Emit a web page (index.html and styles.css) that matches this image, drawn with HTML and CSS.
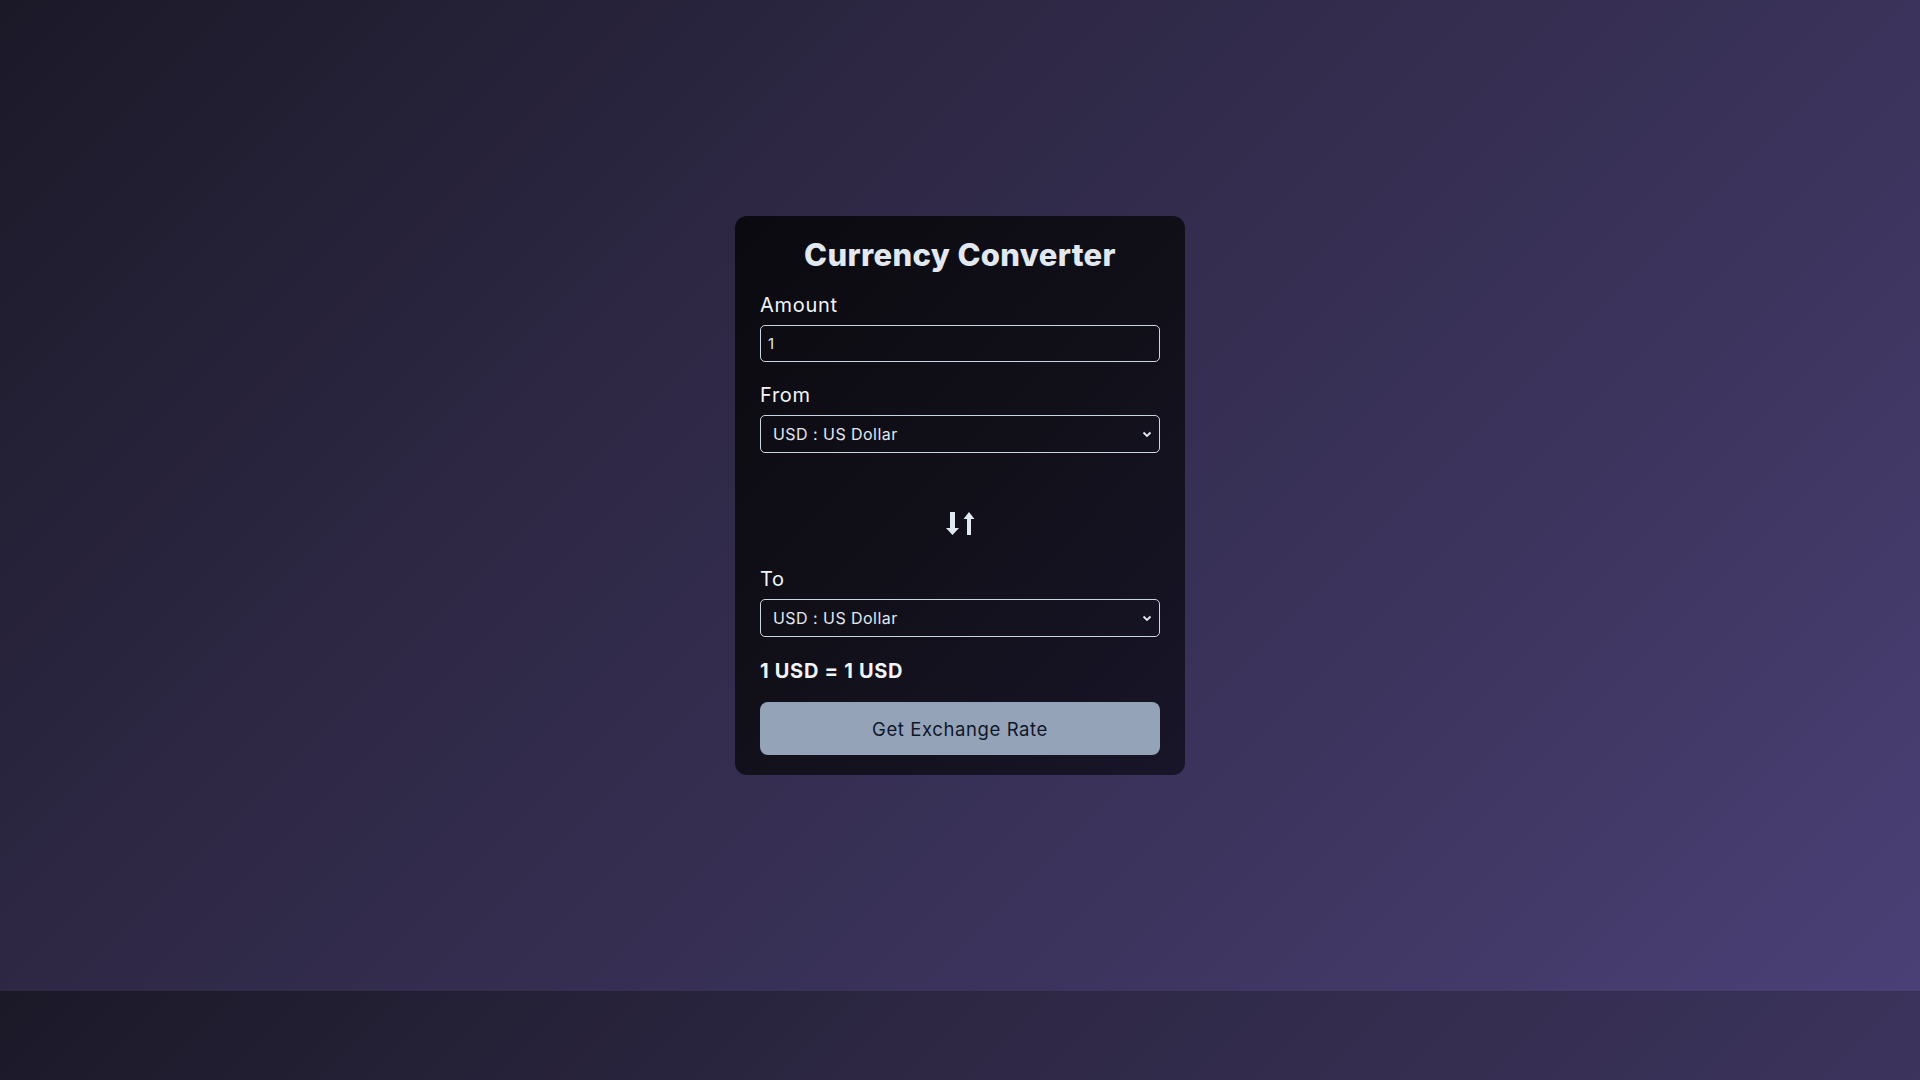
FILE: index.html
```html
<!DOCTYPE html>
<html lang="en">
<head>
<meta charset="utf-8">
<title>Currency Converter</title>
<link rel="stylesheet" href="styles.css">
</head>
<body>
<main class="page">
  <section class="card">
    <h1 class="title">Currency Converter</h1>
    <label class="label" for="amount">Amount</label>
    <input class="field input" id="amount" type="text" value="1">
    <label class="label" for="from">From</label>
    <div class="select-wrap">
      <select class="field select" id="from"><option>USD : US Dollar</option></select>
      <svg class="chev" width="10" height="7" viewBox="0 0 10 7"><path d="M1.5 1.5 L5 5 L8.5 1.5" fill="none" stroke="#e2e8f0" stroke-width="1.8"/></svg>
    </div>
    <div class="swap">
      <svg width="30" height="24" viewBox="0 0 30 24">
        <path d="M3 0 H8 V16 H12 L5.5 23 L-1 16 H3 Z" transform="translate(2 0)" fill="#e2e8f0"/>
        <path d="M22 23 H26 V7 H29.5 L24 0 L18.5 7 H22 Z" fill="#e2e8f0"/>
      </svg>
    </div>
    <label class="label" for="to">To</label>
    <div class="select-wrap">
      <select class="field select" id="to"><option>USD : US Dollar</option></select>
      <svg class="chev" width="10" height="7" viewBox="0 0 10 7"><path d="M1.5 1.5 L5 5 L8.5 1.5" fill="none" stroke="#e2e8f0" stroke-width="1.8"/></svg>
    </div>
    <p class="result">1 USD = 1 USD</p>
    <button class="btn" type="button">Get Exchange Rate</button>
  </section>
</main>
</body>
</html>
```
FILE: styles.css
```css
html {
  background: linear-gradient(135deg, #1b1928 0%, #2e2845 35%, #3c345d 70%, #4b4076 100%);
  background-size: 100% 991px;
  background-repeat: repeat-y;
}
body {
  margin: 0;
  font-family: Inter, "Open Sans", "Liberation Sans", sans-serif;
  color: #f1f5f9;
}
.page {
  min-height: 991px;
  display: flex;
  align-items: center;
  justify-content: center;
}
.card {
  width: 400px;
  padding: 18px 25px 20px;
  border-radius: 12px;
  background: linear-gradient(135deg, #0b0a10 0%, #111019 50%, #181529 100%);
  display: flex;
  flex-direction: column;
}
.title {
  margin: 0 0 16px;
  text-align: center;
  font-size: 31px;
  line-height: 42px;
  font-weight: 800;
  color: #e2e8f0;
  letter-spacing: 0.35px;
}
.label {
  font-size: 20px;
  line-height: 26px;
  color: #f1f5f9;
  letter-spacing: 0.7px;
  margin-bottom: 7px;
}
.field {
  box-sizing: border-box;
  width: 100%;
  background: transparent;
  border: 1px solid #cbd5e1;
  border-radius: 5px;
  color: #e2e8f0;
  font-family: inherit;
  outline: none;
}
.input {
  height: 37px;
  padding: 0 7px;
  font-size: 15px;
  margin-bottom: 20px;
}
.select-wrap {
  position: relative;
}
.select {
  height: 38px;
  padding: 0 12px;
  font-size: 16px;
  letter-spacing: 0.45px;
  appearance: none;
  -webkit-appearance: none;
}
.chev {
  position: absolute;
  right: 8px;
  top: 16px;
}
.swap {
  display: flex;
  justify-content: center;
  padding: 59px 0 30px;
  line-height: 0;
}
.result {
  margin: 22px 0 19px;
  font-size: 20px;
  line-height: 24px;
  font-weight: 700;
  letter-spacing: 0.7px;
  color: #f1f5f9;
}
.btn {
  height: 53px;
  border: none;
  border-radius: 8px;
  background: #94a3b8;
  color: #0f172a;
  font-family: inherit;
  font-size: 18.5px;
  letter-spacing: 0.6px;
}
```
